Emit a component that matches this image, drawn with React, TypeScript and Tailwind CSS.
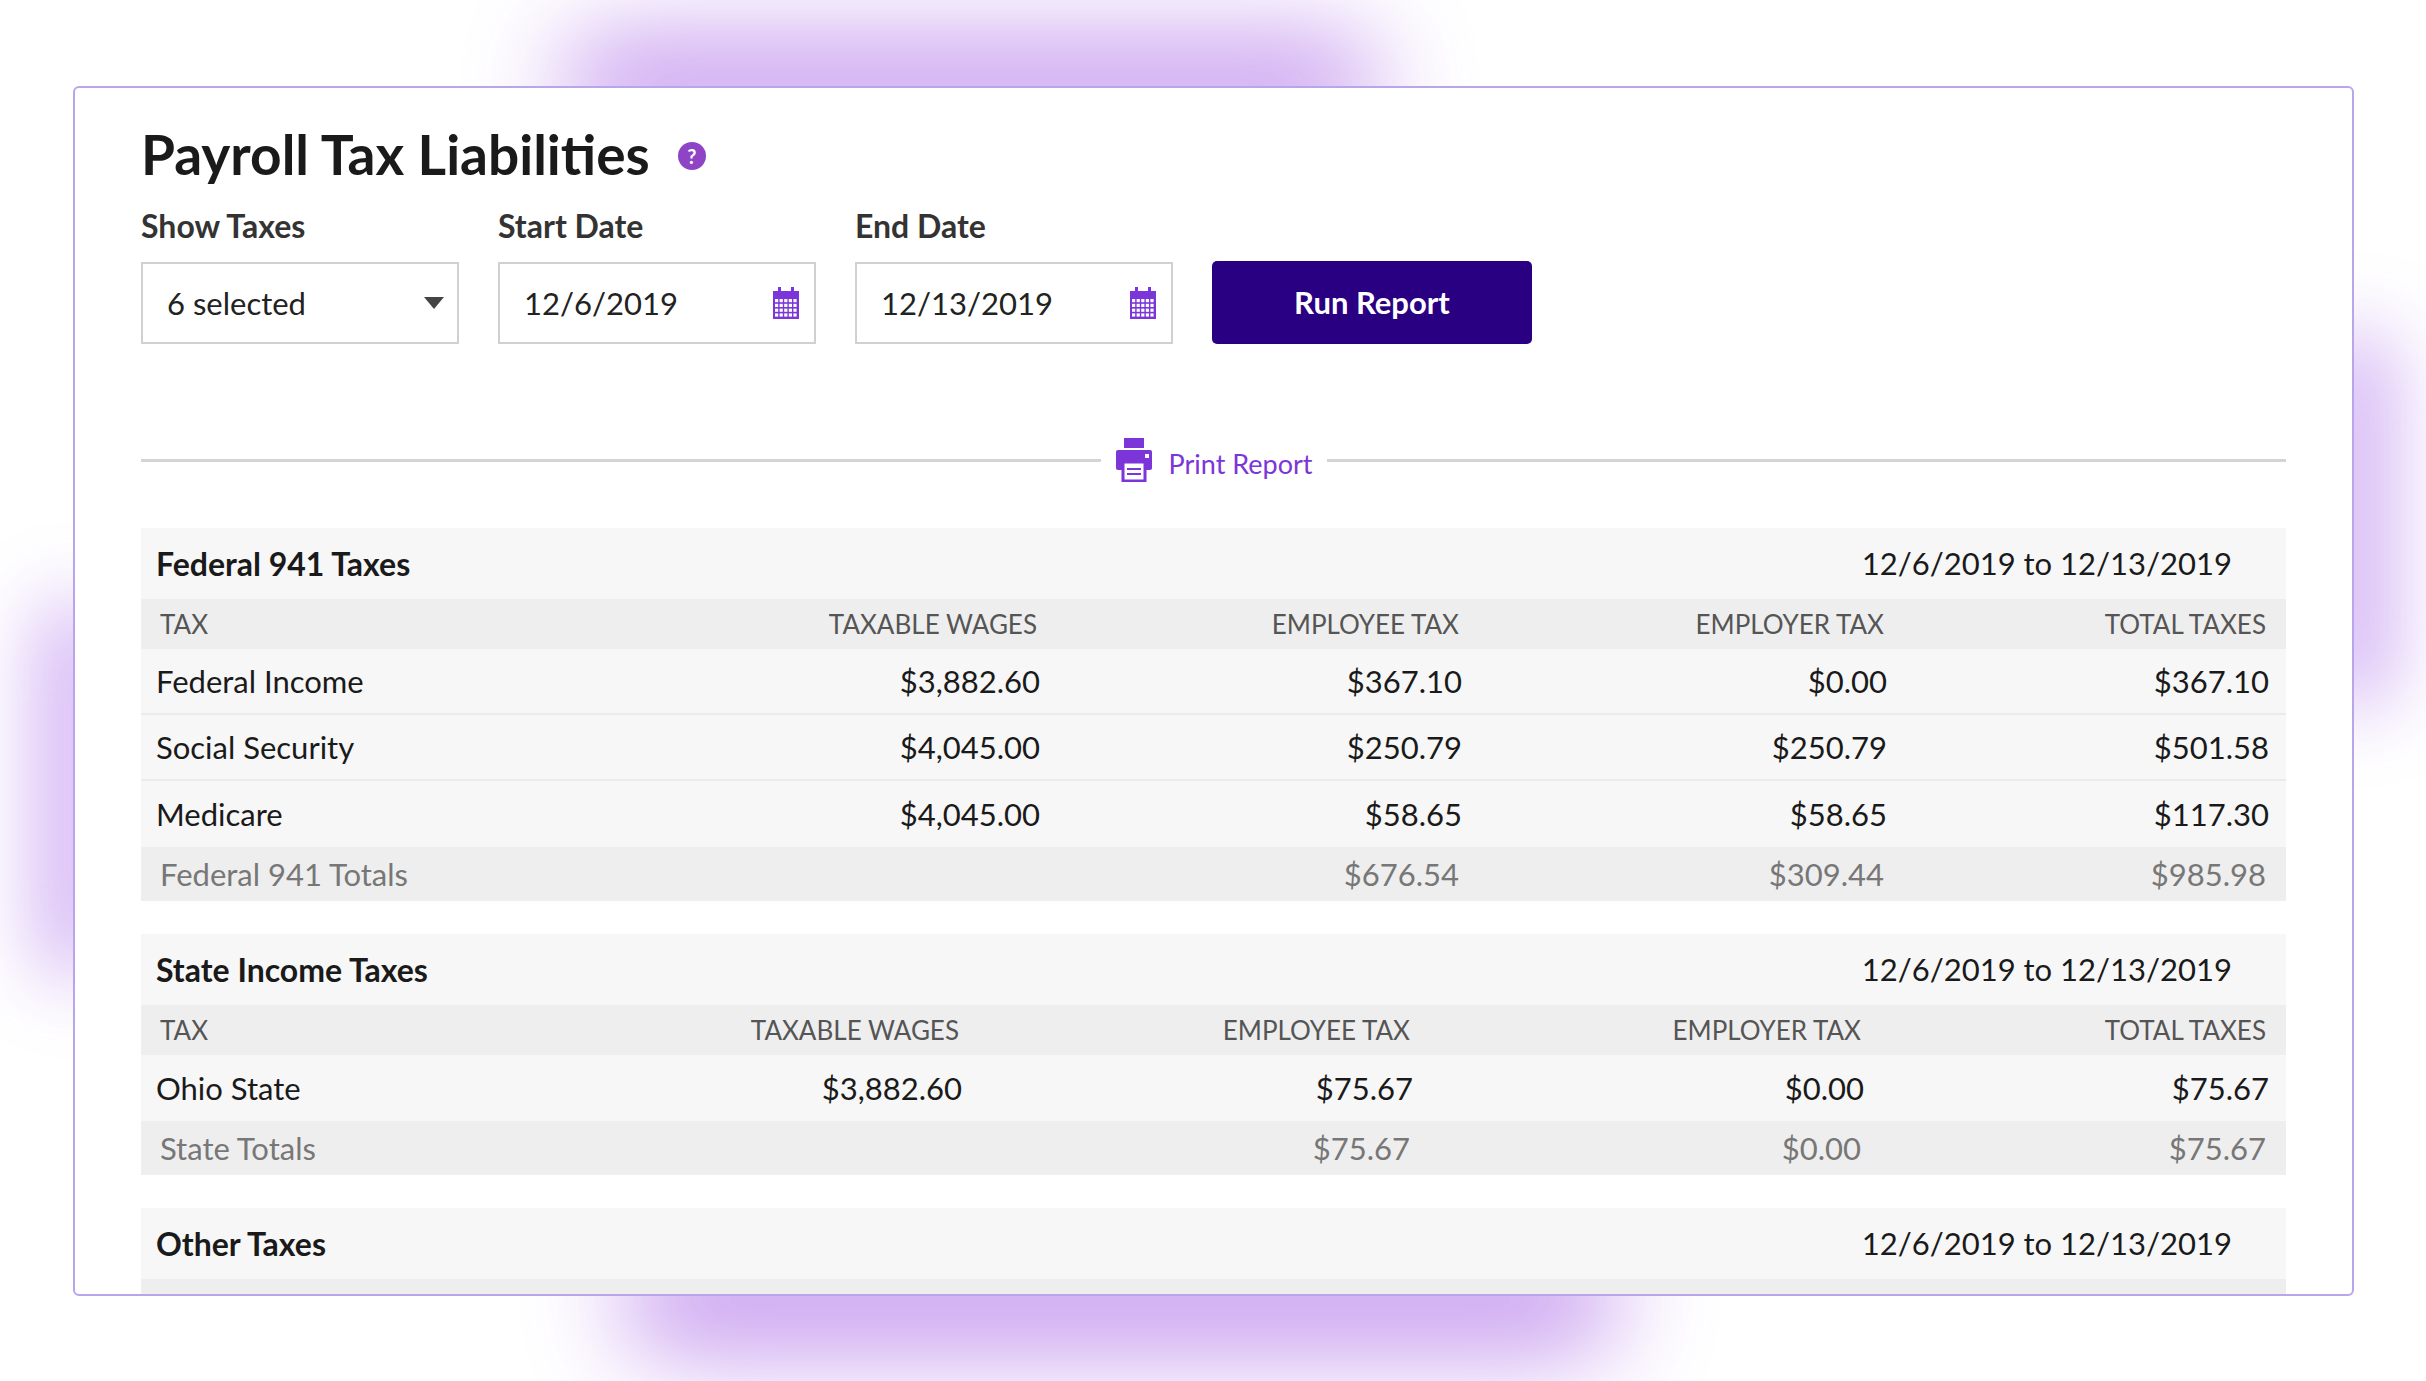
import React from "react";

const Cal = () => (
  <svg width="28" height="34" viewBox="0 0 28 34">
    <rect x="6" y="1" width="3" height="7" fill="#7b35d8" />
    <rect x="19" y="1" width="3" height="7" fill="#7b35d8" />
    <rect x="1" y="5" width="26" height="28" fill="#7b35d8" />
    {[0, 1, 2, 3].map((r) =>
      [0, 1, 2, 3, 4].map((c) => (
        <rect key={r + "-" + c} x={3 + c * 4.6} y={13 + r * 4.8} width="3.2" height="3.2" fill="#fff" />
      ))
    )}
  </svg>
);

const Printer = () => (
  <svg width="38" height="44" viewBox="0 0 38 44">
    <rect x="9" y="0" width="20" height="10" fill="#7b35d8" />
    <rect x="1" y="12" width="36" height="20" rx="2" fill="#7b35d8" />
    <rect x="30" y="16" width="4" height="4" fill="#fff" />
    <rect x="8" y="24" width="22" height="19" fill="#fff" stroke="#7b35d8" strokeWidth="3" />
    <rect x="12" y="30" width="14" height="2" fill="#7b35d8" />
    <rect x="12" y="35" width="14" height="2" fill="#7b35d8" />
  </svg>
);

type Sec = {
  title: string;
  cols: string;
  rows: string[][];
  total?: string[];
  cut?: boolean;
};

const heads = ["TAX", "TAXABLE WAGES", "EMPLOYEE TAX", "EMPLOYER TAX", "TOTAL TAXES"];

const sections: Sec[] = [
  {
    title: "Federal 941 Taxes",
    cols: "400px 515px 422px 425px 382px",
    rows: [
      ["Federal Income", "$3,882.60", "$367.10", "$0.00", "$367.10"],
      ["Social Security", "$4,045.00", "$250.79", "$250.79", "$501.58"],
      ["Medicare", "$4,045.00", "$58.65", "$58.65", "$117.30"],
    ],
    total: ["Federal 941 Totals", "", "$676.54", "$309.44", "$985.98"],
  },
  {
    title: "State Income Taxes",
    cols: "400px 437px 451px 451px 405px",
    rows: [["Ohio State", "$3,882.60", "$75.67", "$0.00", "$75.67"]],
    total: ["State Totals", "", "$75.67", "$0.00", "$75.67"],
  },
  { title: "Other Taxes", cols: "", rows: [], cut: true },
];

function Section({ s }: { s: Sec }) {
  return (
    <div className="flex flex-col">
      <div className="h-[71px] bg-[#f7f7f7] flex items-center justify-between pl-[15px] pr-[54px] text-[31px] text-[#1a1a1a]">
        <span className="font-bold text-[32px]">{s.title}</span>
        <span>12/6/2019 to 12/13/2019</span>
      </div>
      {s.cut ? (
        <div className="h-[20px] bg-[#eeeeee]" />
      ) : (
        <>
          <div className="grid h-[50px] bg-[#eeeeee] items-center text-[26px] text-[#555]" style={{ gridTemplateColumns: s.cols }}>
            {heads.map((h, i) => (
              <div key={h} className={i === 0 ? "pl-[19px]" : "text-right pr-[19px]"}>{h}</div>
            ))}
          </div>
          {s.rows.map((r, ri) => (
            <div
              key={ri}
              className={"grid h-[66px] bg-[#f7f7f7] items-center text-[31px] text-[#1a1a1a] " + (ri < s.rows.length - 1 ? "border-b-2 border-[#ebebeb]" : "")}
              style={{ gridTemplateColumns: s.cols }}
            >
              {r.map((c, i) => (
                <div key={i} className={i === 0 ? "pl-[15px]" : "text-right pr-[16px]"}>{c}</div>
              ))}
            </div>
          ))}
          {s.total && (
            <div className="grid h-[54px] bg-[#eeeeee] items-center text-[31px] text-[#777]" style={{ gridTemplateColumns: s.cols }}>
              {s.total.map((c, i) => (
                <div key={i} className={i === 0 ? "pl-[19px]" : "text-right pr-[19px]"}>{c}</div>
              ))}
            </div>
          )}
        </>
      )}
    </div>
  );
}

export default function App() {
  return (
    <div className="relative w-[2426px] h-[1381px] bg-white overflow-hidden" style={{ fontFamily: "Lato, 'Open Sans', sans-serif" }}>
      <div className="absolute left-[560px] top-[40px] w-[820px] h-[90px] rounded-full bg-[#a865e6] opacity-70 blur-[50px]" />
      <div className="absolute left-[620px] top-[1250px] w-[1000px] h-[100px] rounded-full bg-[#a865e6] opacity-70 blur-[50px]" />
      <div className="absolute left-[40px] top-[600px] w-[70px] h-[380px] rounded-full bg-[#b985ee] opacity-70 blur-[40px]" />
      <div className="absolute left-[2320px] top-[330px] w-[70px] h-[380px] rounded-full bg-[#b985ee] opacity-70 blur-[40px]" />
      <div className="absolute left-[73px] top-[86px] w-[2281px] h-[1210px] bg-white border-2 border-[#b9a6ea] rounded-[6px] overflow-hidden">
        <div className="pl-[66px] pr-[66px] pt-[34px] flex flex-col">
          <div className="flex items-center gap-[28px]">
            <h1 className="text-[55px] font-bold text-[#1a1a1a] leading-[64px]">Payroll Tax Liabilities</h1>
            <div className="w-[28px] h-[28px] rounded-full bg-[#8e44c4] text-white text-[20px] font-bold flex items-center justify-center mt-[4px]">?</div>
          </div>
          <div className="flex items-end gap-[39px] mt-[16px]">
            <div className="flex flex-col gap-[12px]">
              <label className="text-[32px] font-bold text-[#333]">Show Taxes</label>
              <div className="w-[318px] h-[82px] border-2 border-[#d0d0d0] flex items-center justify-between pl-[24px] pr-[12px] text-[31px] text-[#222]">
                <span>6 selected</span>
                <svg width="22" height="16" viewBox="0 0 22 16"><polygon points="1,2 21,2 11,14" fill="#444" /></svg>
              </div>
            </div>
            {[["Start Date", "12/6/2019"], ["End Date", "12/13/2019"]].map(([l, v]) => (
              <div key={l} className="flex flex-col gap-[12px]">
                <label className="text-[32px] font-bold text-[#333]">{l}</label>
                <div className="w-[318px] h-[82px] border-2 border-[#d0d0d0] flex items-center justify-between pl-[24px] pr-[14px] text-[31px] text-[#222]">
                  <span>{v}</span>
                  <Cal />
                </div>
              </div>
            ))}
            <button className="w-[320px] h-[83px] rounded-[5px] bg-[#2a0082] text-white text-[31px] font-bold">Run Report</button>
          </div>
          <div className="flex items-center mt-[94px] h-[44px]">
            <div className="flex-1 h-[3px] bg-[#d4d4d4]" />
            <div className="flex items-center gap-[16px] px-[14px] text-[27px] text-[#7b35d8]">
              <Printer />
              <span className="mt-[8px]">Print Report</span>
            </div>
            <div className="flex-1 h-[3px] bg-[#d4d4d4]" />
          </div>
          <div className="flex flex-col gap-[33px] mt-[46px]">
            {sections.map((s) => (
              <Section key={s.title} s={s} />
            ))}
          </div>
        </div>
      </div>
    </div>
  );
}
